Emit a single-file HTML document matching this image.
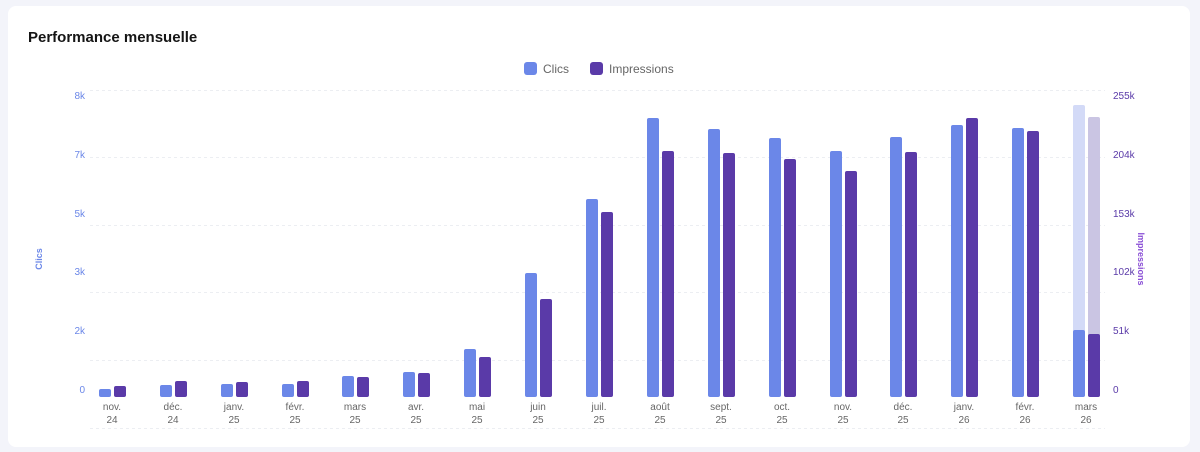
<!DOCTYPE html>
<html><head><meta charset="utf-8"><style>
body{margin:0;width:1200px;height:452px;background:#f3f4fa;font-family:"Liberation Sans",sans-serif;overflow:hidden}
.card{position:absolute;left:8px;top:6px;width:1182px;height:441px;background:#fff;border-radius:8px}
</style></head><body>
<div class="card"></div>
<svg width="1200" height="452" style="position:absolute;left:0;top:0" font-family="Liberation Sans, sans-serif">
<text x="28" y="42" font-size="15" font-weight="bold" fill="#151515">Performance mensuelle</text>
<rect x="524" y="62" width="13" height="13" rx="3" fill="#6b87e8"/>
<text x="543" y="73" font-size="12" fill="#666">Clics</text>
<rect x="590" y="62" width="13" height="13" rx="3" fill="#5a3aa8"/>
<text x="609" y="73" font-size="12" fill="#666">Impressions</text>
<g stroke="#eceef2" stroke-dasharray="3 3" stroke-width="1">
<line x1="90" y1="90.5" x2="1105" y2="90.5"/><line x1="90" y1="157.5" x2="1105" y2="157.5"/>
<line x1="90" y1="225.5" x2="1105" y2="225.5"/><line x1="90" y1="292.5" x2="1105" y2="292.5"/>
<line x1="90" y1="360.5" x2="1105" y2="360.5"/><line x1="90" y1="428.5" x2="1105" y2="428.5"/>
</g>
<g font-size="10" fill="#6b87e8" text-anchor="end">
<text x="85" y="99">8k</text><text x="85" y="158">7k</text><text x="85" y="217">5k</text>
<text x="85" y="275">3k</text><text x="85" y="334">2k</text><text x="85" y="393">0</text>
</g>
<g font-size="10" fill="#5a3aa8">
<text x="1113" y="99">255k</text><text x="1113" y="158">204k</text><text x="1113" y="217">153k</text>
<text x="1113" y="275">102k</text><text x="1113" y="334">51k</text><text x="1113" y="393">0</text>
</g>
<text transform="translate(42,259) rotate(-90)" font-size="9" font-weight="bold" fill="#6b87e8" text-anchor="middle">Clics</text>
<text transform="translate(1138,259) rotate(90)" font-size="9" font-weight="bold" fill="#8a4fd6" text-anchor="middle">Impressions</text>
<rect x="1073" y="105" width="12" height="292" rx="2" fill="#d3daf7"/>
<rect x="1088" y="117" width="12" height="280" rx="2" fill="#cac5e3"/>
<g fill="#6b87e8">
<rect x="99" y="389" width="12" height="8" rx="2"/>
<rect x="160" y="385" width="12" height="12" rx="2"/>
<rect x="221" y="384" width="12" height="13" rx="2"/>
<rect x="282" y="384" width="12" height="13" rx="2"/>
<rect x="342" y="376" width="12" height="21" rx="2"/>
<rect x="403" y="372" width="12" height="25" rx="2"/>
<rect x="464" y="349" width="12" height="48" rx="2"/>
<rect x="525" y="273" width="12" height="124" rx="2"/>
<rect x="586" y="199" width="12" height="198" rx="2"/>
<rect x="647" y="118" width="12" height="279" rx="2"/>
<rect x="708" y="129" width="12" height="268" rx="2"/>
<rect x="769" y="138" width="12" height="259" rx="2"/>
<rect x="830" y="151" width="12" height="246" rx="2"/>
<rect x="890" y="137" width="12" height="260" rx="2"/>
<rect x="951" y="125" width="12" height="272" rx="2"/>
<rect x="1012" y="128" width="12" height="269" rx="2"/>
<rect x="1073" y="330" width="12" height="67" rx="2"/>
</g>
<g fill="#5a3aa8">
<rect x="114" y="386" width="12" height="11" rx="2"/>
<rect x="175" y="381" width="12" height="16" rx="2"/>
<rect x="236" y="382" width="12" height="15" rx="2"/>
<rect x="297" y="381" width="12" height="16" rx="2"/>
<rect x="357" y="377" width="12" height="20" rx="2"/>
<rect x="418" y="373" width="12" height="24" rx="2"/>
<rect x="479" y="357" width="12" height="40" rx="2"/>
<rect x="540" y="299" width="12" height="98" rx="2"/>
<rect x="601" y="212" width="12" height="185" rx="2"/>
<rect x="662" y="151" width="12" height="246" rx="2"/>
<rect x="723" y="153" width="12" height="244" rx="2"/>
<rect x="784" y="159" width="12" height="238" rx="2"/>
<rect x="845" y="171" width="12" height="226" rx="2"/>
<rect x="905" y="152" width="12" height="245" rx="2"/>
<rect x="966" y="118" width="12" height="279" rx="2"/>
<rect x="1027" y="131" width="12" height="266" rx="2"/>
<rect x="1088" y="334" width="12" height="63" rx="2"/>
</g>
<g font-size="10" fill="#666" text-anchor="middle">
<text x="112" y="410">nov.</text><text x="112" y="423">24</text>
<text x="173" y="410">déc.</text><text x="173" y="423">24</text>
<text x="234" y="410">janv.</text><text x="234" y="423">25</text>
<text x="295" y="410">févr.</text><text x="295" y="423">25</text>
<text x="355" y="410">mars</text><text x="355" y="423">25</text>
<text x="416" y="410">avr.</text><text x="416" y="423">25</text>
<text x="477" y="410">mai</text><text x="477" y="423">25</text>
<text x="538" y="410">juin</text><text x="538" y="423">25</text>
<text x="599" y="410">juil.</text><text x="599" y="423">25</text>
<text x="660" y="410">août</text><text x="660" y="423">25</text>
<text x="721" y="410">sept.</text><text x="721" y="423">25</text>
<text x="782" y="410">oct.</text><text x="782" y="423">25</text>
<text x="843" y="410">nov.</text><text x="843" y="423">25</text>
<text x="903" y="410">déc.</text><text x="903" y="423">25</text>
<text x="964" y="410">janv.</text><text x="964" y="423">26</text>
<text x="1025" y="410">févr.</text><text x="1025" y="423">26</text>
<text x="1086" y="410">mars</text><text x="1086" y="423">26</text>
</g>
</svg>
</body></html>
